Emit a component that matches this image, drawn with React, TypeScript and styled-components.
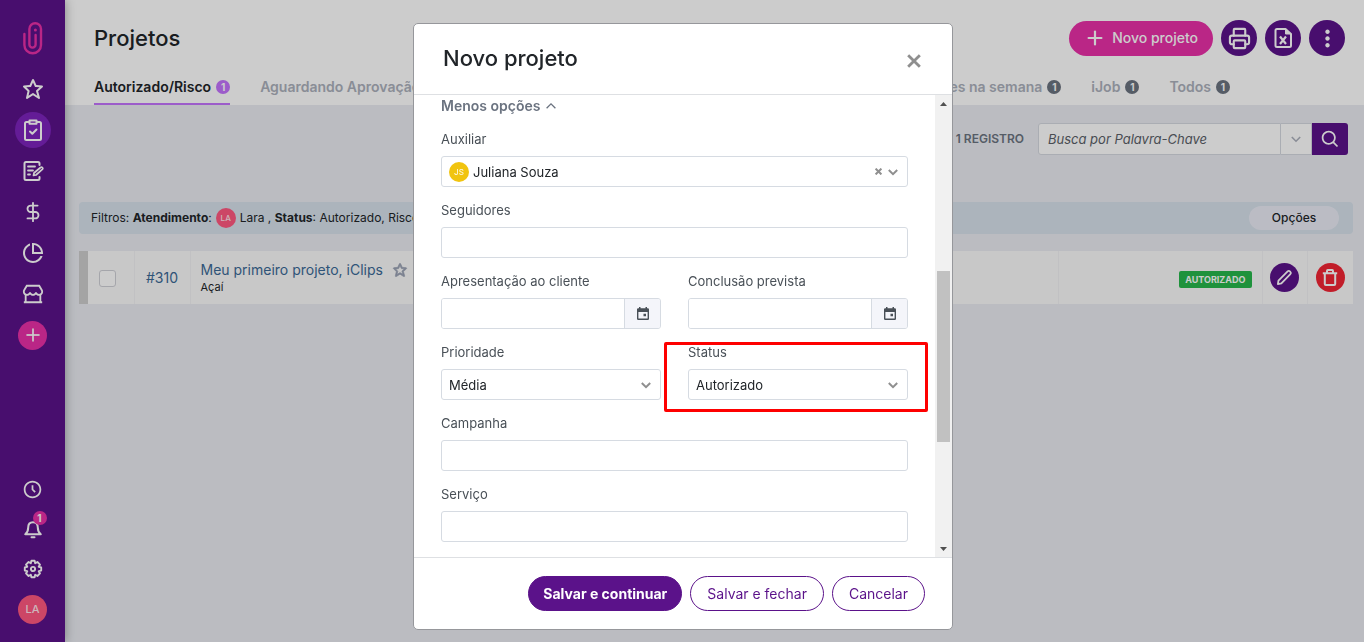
import React, { useId } from 'react';
import styled, { createGlobalStyle, css } from 'styled-components';
import { BiStar, BiTimeFive, BiDotsVerticalRounded, BiSearch } from 'react-icons/bi';
import { RiPieChartLine, RiStore2Line } from 'react-icons/ri';
import { LuDollarSign, LuPrinter, LuPlus } from 'react-icons/lu';

const purple = '#5b128a';
const pink = '#e930a8';

const GlobalStyle = createGlobalStyle`
  *, *::before, *::after { box-sizing: border-box; }
  body {
    margin: 0;
    background: #eaecf2;
    color: #212529;
    font-family: Inter, 'Liberation Sans', sans-serif;
    font-size: 14px;
    line-height: 20px;
  }
  button, input, select { font: inherit; color: inherit; margin: 0; }
  button { cursor: pointer; border: 0; padding: 0; background: none; }
  a { text-decoration: none; color: inherit; }
  svg { display: block; flex: none; }
`;

/* ---------- icons ---------- */

const ClipLogo = () => (
  <svg width="24" height="36" viewBox="0 0 24 36" fill="none" stroke={pink} strokeWidth="2.4" strokeLinecap="round">
    <path d="M3.4 14v11a8.3 8.3 0 0 0 16.6 0V9a5.8 5.8 0 0 0-11.6 0v15.500a3.100 3.100 0 0 0 6.200 0V15" />
    <circle cx="14.400" cy="10" r="1.500" fill={pink} stroke="none" />
  </svg>
);

const ClipboardIcon = () => (
  <svg width="20" height="22" viewBox="0 0 20 22" fill="none" stroke="currentColor" strokeWidth="2" strokeLinecap="round" strokeLinejoin="round">
    <path d="M6 3H3.500A1.500 1.500 0 0 0 2 4.500v15A1.500 1.500 0 0 0 3.500 21h13a1.500 1.500 0 0 0 1.500-1.500v-15A1.500 1.500 0 0 0 16.500 3H14" />
    <path d="M6.500 1.500h7v3.200h-7zM7 12.500l2.300 2.300L13.500 10.500" />
  </svg>
);

const NoteIcon = () => (
  <svg width="22" height="22" viewBox="0 0 22 22" fill="none" stroke="currentColor" strokeWidth="2" strokeLinecap="round" strokeLinejoin="round">
    <path d="M17.500 5V3.500a1.500 1.500 0 0 0-1.500-1.500H4a1.500 1.500 0 0 0-1.500 1.500v15A1.500 1.500 0 0 0 4 20h12a1.500 1.500 0 0 0 1.500-1.500V17" />
    <path d="M6 6.500h7M6 10.500h5M6 14.500h2" strokeWidth="1.800" />
    <path d="M11.500 15.500l.5-2.500 6.500-5.500a1.300 1.300 0 0 1 1.800 1.900L14 15z" strokeWidth="1.700" />
  </svg>
);

const BellIcon = () => (
  <svg width="20" height="20" viewBox="0 0 20 20" fill="none" stroke="currentColor" strokeWidth="2" strokeLinecap="round" strokeLinejoin="round">
    <path d="M10 3.200C6.600 3.200 5.200 5.800 5.200 8.500c0 3.500-1 5.300-3 6.700h15.600c-2-1.400-3-3.200-3-6.700 0-2.700-1.400-5.300-4.800-5.300z" />
    <path d="M8.500 18.200h3" />
  </svg>
);

const GearIcon = () => (
  <svg width="20" height="20" viewBox="0 0 20 20" fill="none" stroke="currentColor" strokeWidth="1.900" strokeLinejoin="round">
    <path d="M8.400 1.800h3.200l.6 2.500 2.200-1.300 2.600 2.600-1.300 2.200 2.500.6v3.200l-2.500.6 1.300 2.200-2.600 2.600-2.200-1.300-.6 2.500H8.400l-.6-2.500L5.600 17 3 14.400l1.300-2.200-2.500-.6V8.400l2.500-.6L3 5.600 5.600 3l2.200 1.300z" />
    <circle cx="10" cy="10" r="2.100" />
  </svg>
);

const SheetIcon = () => (
  <svg width="22" height="22" viewBox="0 0 22 22" fill="none" stroke="currentColor" strokeWidth="2" strokeLinejoin="round">
    <path d="M13.500 2H5a1.500 1.500 0 0 0-1.500 1.500v15A1.500 1.500 0 0 0 5 20h12.500a1.500 1.500 0 0 0 1.500-1.500V7z" />
    <path d="M13.500 2v5H19z" fill="currentColor" strokeWidth="1" />
    <path d="M8 9.500l6 7.500M14 9.500L8 17" strokeWidth="2.200" />
  </svg>
);

const PencilIcon = () => (
  <svg width="17" height="17" viewBox="0 0 18 18" fill="none" stroke="currentColor" strokeWidth="1.900" strokeLinejoin="round">
    <path d="M2 16l.6-3.700L12.300 2.600a1.700 1.700 0 0 1 2.400 0l.5.5a1.700 1.700 0 0 1 0 2.400L5.700 15.300z" />
  </svg>
);

const TrashIcon = () => (
  <svg width="16" height="18" viewBox="0 0 16 18" fill="none" stroke="currentColor" strokeWidth="2" strokeLinejoin="round">
    <path d="M2.800 4.500V15a1 1 0 0 0 1 1h8.400a1 1 0 0 0 1-1V4.500M.8 4.300h14.400M5 4V1.900a.8.8 0 0 1 .8-.8h4.400a.8.8 0 0 1 .8.8V4" />
  </svg>
);

const CalendarIcon = () => (
  <svg width="14" height="14" viewBox="0 0 14 14" fill="#495057">
    <path fillRule="evenodd" d="M3 0h1.500v1.200h5V0H11v1.200h.8A1.200 1.200 0 0 1 13 2.400v9.400a1.200 1.200 0 0 1-1.200 1.200H2.200A1.200 1.200 0 0 1 1 11.800V2.400a1.200 1.200 0 0 1 1.200-1.200H3zM2.400 5v6.600h9.200V5z" />
    <path d="M7.500 6.800H10v2.400H7.500z" />
  </svg>
);

const Chevron = ({ up = false, size = 10, weight = 2 }: { up?: boolean; size?: number; weight?: number }) => (
  <svg width={size} height={size} viewBox="0 0 10 10" fill="none" stroke="currentColor" strokeWidth={weight}>
    <path d={up ? 'M.6 7.200L5 2.800l4.400 4.400' : 'M.8 3L5 7.200 9.200 3'} />
  </svg>
);

const Cross = ({ size, weight }: { size: number; weight: number }) => (
  <svg width={size} height={size} viewBox="0 0 12 12" fill="none" stroke="#8f8f8f" strokeWidth={weight}>
    <path d="M1 1l10 10M11 1L1 11" />
  </svg>
);

/* ---------- page frame ---------- */

const Shell = styled.div`
  display: flex;
  min-height: 100vh;
`;

const Sidebar = styled.nav`
  display: flex;
  flex-direction: column;
  align-items: center;
  flex: none;
  width: 65px;
  padding: 20px 0 15px;
  background: ${purple};
  color: #fff;
  box-shadow: 0 0 10px rgba(0, 0, 0, 0.35);
  z-index: 1;
`;

const LogoLink = styled.a`
  height: 51px;
`;

const SideGroup = styled.div<{ $bottom?: boolean }>`
  display: flex;
  flex-direction: column;
  align-items: center;
  gap: ${p => (p.$bottom ? 4 : 5)}px;
  ${p => p.$bottom && 'margin-top: auto;'}
`;

const SideButton = styled.button<{ $active?: boolean }>`
  position: relative;
  display: grid;
  place-items: center;
  width: 36px;
  height: 36px;
  border-radius: 50%;
  background: ${p => (p.$active ? '#7d24bd' : 'transparent')};
`;

const Disc = styled.span<{ $size: number; $color: string; $font?: number }>`
  display: inline-grid;
  place-items: center;
  flex: none;
  width: ${p => p.$size}px;
  height: ${p => p.$size}px;
  border-radius: 50%;
  background: ${p => p.$color};
  color: rgba(255, 255, 255, 0.85);
  font-size: ${p => p.$font ?? 12}px;
  font-weight: 500;
`;

const Notice = styled.span`
  position: absolute;
  top: 0;
  right: 4px;
  width: 14px;
  border-radius: 50%;
  background: ${pink};
  font-size: 10px;
  font-weight: 700;
  line-height: 14px;
`;

const Main = styled.main`
  flex: 1;
  min-width: 0;
`;

const Header = styled.header`
  display: flex;
  flex-direction: column;
  height: 105px;
  padding: 20px 19px 0 29px;
  background: #fff;
`;

const TitleRow = styled.div`
  display: flex;
  align-items: center;
  justify-content: space-between;
`;

const Title = styled.h1`
  margin: 0;
  font-size: 22px;
  font-weight: 500;
  line-height: 36px;
`;

const Actions = styled.div`
  display: flex;
  align-items: center;
  gap: 8px;
`;

const NewButton = styled.button`
  display: flex;
  align-items: center;
  gap: 6px;
  height: 35px;
  padding: 0 15px;
  border-radius: 18px;
  background: ${pink};
  color: #fff;
  font-weight: 500;
`;

const RoundButton = styled.button<{ $size?: number; $color?: string }>`
  display: grid;
  place-items: center;
  width: ${p => p.$size ?? 36}px;
  height: ${p => p.$size ?? 36}px;
  border-radius: 50%;
  background: ${p => p.$color ?? purple};
  color: #fff;
`;

const Tabs = styled.div`
  display: flex;
  justify-content: space-between;
  margin-top: auto;
  padding-right: 115px;
`;

const TabGroup = styled.div`
  display: flex;
  gap: 30px;
  white-space: nowrap;
`;

const Tab = styled.a<{ $active?: boolean }>`
  display: flex;
  align-items: center;
  gap: 5px;
  height: 30px;
  padding-bottom: 5px;
  color: ${p => (p.$active ? '#212529' : '#acb1bc')};
  font-weight: 600;
  border-bottom: 2px solid ${p => (p.$active ? '#c373fd' : 'transparent')};
`;

const Count = styled.span<{ $active?: boolean }>`
  width: 14px;
  border-radius: 7px;
  background: ${p => (p.$active ? '#c373fd' : '#6b7380')};
  color: #fff;
  font-size: 10px;
  font-weight: 700;
  line-height: 14px;
  text-align: center;
`;

/* ---------- list ---------- */

const SearchRow = styled.form`
  display: flex;
  align-items: center;
  justify-content: flex-end;
  padding: 18px 16px 0 0;
`;

const Total = styled.span`
  margin-right: 14px;
  color: #6b7380;
  font-size: 12px;
  font-weight: 600;
`;

const SearchInput = styled.input`
  width: 243px;
  height: 32px;
  padding: 0 9px;
  border: 1px solid #d5d9e0;
  border-radius: 3px 0 0 3px;
  background: #fff;
  font-size: 13px;
  &::placeholder { color: #5b6068; font-style: italic; opacity: 1; }
`;

const SearchMore = styled.button`
  display: grid;
  place-items: center;
  width: 31px;
  height: 32px;
  border: 1px solid #d5d9e0;
  border-left: 0;
  background: #fff;
  color: #acb1bc;
`;

const SearchSubmit = styled.button`
  display: grid;
  place-items: center;
  width: 36px;
  height: 32px;
  border-radius: 0 3px 3px 0;
  background: ${purple};
  color: #fff;
`;

const Content = styled.div`
  padding: 47px 11px 0 14px;
`;

const Filters = styled.div`
  display: flex;
  align-items: center;
  justify-content: space-between;
  height: 32px;
  padding: 0 14px 0 12px;
  border-radius: 4px;
  background: #d7e1eb;
  font-size: 12px;
`;

const FilterText = styled.span`
  display: flex;
  align-items: center;
  gap: 4px;
`;

const OptionsButton = styled.button`
  width: 90px;
  height: 24px;
  border-radius: 12px;
  background: #eaecf6;
  font-weight: 500;
`;

const Table = styled.table`
  width: 100%;
  margin-top: 17px;
  border-collapse: collapse;
  background: #fafafa;
`;

const Cell = styled.td<{ $w?: number; $line?: boolean }>`
  height: 53px;
  padding: 0;
  ${p => p.$w && css`width: ${p.$w}px;`}
  ${p => p.$line && css`border-left: 1px solid #f2f2f4;`}
  text-align: center;
  vertical-align: middle;
`;

const StripeCell = styled(Cell)`
  background: #cecece;
`;

const TickCell = styled(Cell)`
  padding: 2px 0 0 11px;
`;

const NameCell = styled(Cell)`
  padding: 0 0 0 10px;
  text-align: left;
`;

const StatusCell = styled(Cell)`
  padding: 0 10px 0 0;
  text-align: right;
`;

const Tick = styled.input`
  appearance: none;
  display: block;
  width: 17px;
  height: 17px;
  margin: 0;
  border: 1px solid #cfd0d6;
  border-radius: 3px;
  background: #fff;
`;

const ProjectLink = styled.a`
  color: #3b6996;
`;

const NameLine = styled.div`
  display: flex;
  align-items: center;
  gap: 9px;
  line-height: 18px;
  svg { color: #9aa2b4; stroke: currentColor; stroke-width: 1; }
`;

const Client = styled.div`
  font-size: 11px;
  line-height: 16px;
`;

const StatusTag = styled.span`
  display: inline-block;
  padding: 0 6px;
  border-radius: 2px;
  background: #27b74b;
  color: #fff;
  font-size: 9px;
  font-weight: 700;
  line-height: 17px;
`;

const CellButton = styled(RoundButton)`
  margin: 0 auto;
`;

/* ---------- dialog ---------- */

const Backdrop = styled.div`
  position: fixed;
  inset: 0;
  z-index: 10;
  display: flex;
  justify-content: center;
  padding: 23px 0 12px 2px;
  background: rgba(0, 0, 0, 0.2);
`;

const Dialog = styled.section`
  display: flex;
  flex-direction: column;
  width: 540px;
  border: 1px solid #96979b;
  border-radius: 5px;
  background: #fff;
  overflow: hidden;
`;

const DialogHead = styled.header`
  display: flex;
  align-items: center;
  justify-content: space-between;
  flex: none;
  height: 71px;
  padding: 0 31px 0 29px;
  border-bottom: 1px solid #dee0e3;
`;

const DialogTitle = styled.h2`
  margin: 0;
  padding-bottom: 2px;
  font-size: 22px;
  font-weight: 500;
`;

const CloseButton = styled.button`
  padding-top: 4px;
`;

const DialogBody = styled.div`
  display: flex;
  flex: 1;
  min-height: 0;
  overflow: hidden;
`;

const Fields = styled.form`
  display: flex;
  flex-direction: column;
  gap: 13px;
  flex: 1;
  min-width: 0;
  padding: 0 27px;
`;

const ToggleButton = styled.button`
  display: flex;
  align-items: center;
  align-self: flex-start;
  gap: 6px;
  height: 21px;
  color: #6b7380;
  font-weight: 600;
`;

const Field = styled.div<{ $marked?: boolean }>`
  position: relative;
  display: flex;
  flex-direction: column;
  gap: 7px;
  min-width: 0;
  ${p => p.$marked && css`
    &::after {
      content: '';
      position: absolute;
      inset: 0 -20px -12px -24px;
      border: 3px solid #fe0000;
      border-radius: 2px;
      pointer-events: none;
    }
  `}
`;

const Pair = styled.div`
  display: grid;
  grid-template-columns: 1fr 1fr;
  gap: 27px;
`;

const Label = styled.label`
  color: #495057;
  font-size: 13px;
`;

const box = css`
  width: 100%;
  height: 31px;
  border: 1px solid #d6dbe2;
  border-radius: 3px;
  background: #fff;
  font-size: 13px;
`;

const TextInput = styled.input`
  ${box}
  padding: 0 8px;
`;

const PersonBox = styled.div`
  ${box}
  display: flex;
  align-items: center;
  gap: 4px;
  padding: 0 9px 0 7px;
  color: #8f8f8f;
`;

const PersonInput = styled.input`
  flex: 1;
  min-width: 0;
  padding: 0;
  border: 0;
  background: none;
  color: #212529;
`;

const PersonTools = styled.span`
  display: flex;
  align-items: center;
  gap: 6px;
`;

const DateBox = styled.div`
  ${box}
  display: flex;
  overflow: hidden;
`;

const DateInput = styled.input`
  flex: 1;
  min-width: 0;
  padding: 0 8px;
  border: 0;
`;

const DateButton = styled.button`
  display: grid;
  place-items: center;
  width: 36px;
  border-left: 1px solid #d6dbe2;
  background: #f4f5fa;
`;

const SelectWrap = styled.div`
  display: grid;
  align-items: center;
  color: #8f8f8f;
  > * { grid-area: 1 / 1; }
  > svg { justify-self: end; margin-right: 10px; pointer-events: none; }
`;

const Select = styled.select`
  ${box}
  appearance: none;
  padding: 0 24px 0 7px;
  color: #212529;
`;

const Scrollbar = styled.div`
  display: flex;
  flex: none;
  flex-direction: column;
  align-items: center;
  width: 17px;
  background: #f1f1f1;
`;

const ScrollArrow = styled.span`
  display: grid;
  place-items: center;
  width: 17px;
  height: 17px;
`;

const ScrollSpace = styled.span<{ $part: number }>`
  flex: ${p => p.$part};
`;

const ScrollThumb = styled.span`
  flex: 171;
  width: 13px;
  background: #c1c1c1;
`;

const DialogFoot = styled.footer`
  display: flex;
  align-items: center;
  justify-content: flex-end;
  gap: 8px;
  flex: none;
  height: 72px;
  padding: 0 27px;
  border-top: 1px solid #dee0e3;
`;

const PillButton = styled.button<{ $primary?: boolean }>`
  height: 35px;
  padding: 0 ${p => (p.$primary ? 14 : 16)}px;
  border: 1px solid ${purple};
  border-radius: 18px;
  background: ${p => (p.$primary ? purple : '#fff')};
  color: ${p => (p.$primary ? '#fff' : purple)};
  font-weight: ${p => (p.$primary ? 700 : 400)};
`;

function TextField({ label }: { label: string }) {
  const id = useId();
  return (
    <Field>
      <Label htmlFor={id}>{label}</Label>
      <TextInput id={id} type="text" />
    </Field>
  );
}

function DateField({ label }: { label: string }) {
  const id = useId();
  return (
    <Field>
      <Label htmlFor={id}>{label}</Label>
      <DateBox>
        <DateInput id={id} type="text" />
        <DateButton type="button" aria-label={label}><CalendarIcon /></DateButton>
      </DateBox>
    </Field>
  );
}

function SelectField({ label, value, marked }: { label: string; value: string; marked?: boolean }) {
  const id = useId();
  return (
    <Field $marked={marked}>
      <Label htmlFor={id}>{label}</Label>
      <SelectWrap>
        <Select id={id} defaultValue={value}><option>{value}</option></Select>
        <Chevron />
      </SelectWrap>
    </Field>
  );
}

function SideNav() {
  return (
    <Sidebar>
      <LogoLink href="#" aria-label="iClips"><ClipLogo /></LogoLink>
      <SideGroup>
        <SideButton aria-label="Favoritos"><BiStar size={24} /></SideButton>
        <SideButton $active aria-label="Projetos"><ClipboardIcon /></SideButton>
        <SideButton aria-label="Notas"><NoteIcon /></SideButton>
        <SideButton aria-label="Financeiro"><LuDollarSign size={22} /></SideButton>
        <SideButton aria-label="Relatórios"><RiPieChartLine size={24} /></SideButton>
        <SideButton aria-label="Loja"><RiStore2Line size={22} /></SideButton>
        <SideButton aria-label="Adicionar">
          <Disc $size={29} $color={pink}><LuPlus size={20} strokeWidth={2.4} /></Disc>
        </SideButton>
      </SideGroup>
      <SideGroup $bottom>
        <SideButton aria-label="Histórico"><BiTimeFive size={21} /></SideButton>
        <SideButton aria-label="Notificações"><BellIcon /><Notice>1</Notice></SideButton>
        <SideButton aria-label="Configurações"><GearIcon /></SideButton>
        <SideButton aria-label="Perfil"><Disc $size={29} $color="#ff5880" $font={11}>LA</Disc></SideButton>
      </SideGroup>
    </Sidebar>
  );
}

function ProjectDialog() {
  return (
    <Backdrop>
      <Dialog role="dialog" aria-modal="true" aria-label="Novo projeto">
        <DialogHead>
          <DialogTitle>Novo projeto</DialogTitle>
          <CloseButton aria-label="Fechar"><Cross size={14} weight={2.4} /></CloseButton>
        </DialogHead>
        <DialogBody>
          <Fields>
            <ToggleButton type="button">Menos opções <Chevron up weight={1.3} /></ToggleButton>
            <Field>
              <Label htmlFor="auxiliar">Auxiliar</Label>
              <PersonBox>
                <Disc $size={20} $color="#f1c40f" $font={8}>JS</Disc>
                <PersonInput id="auxiliar" defaultValue="Juliana Souza" />
                <PersonTools>
                  <button type="button" aria-label="Limpar"><Cross size={7} weight={3.4} /></button>
                  <Chevron />
                </PersonTools>
              </PersonBox>
            </Field>
            <TextField label="Seguidores" />
            <Pair>
              <DateField label="Apresentação ao cliente" />
              <DateField label="Conclusão prevista" />
            </Pair>
            <Pair>
              <SelectField label="Prioridade" value="Média" />
              <SelectField label="Status" value="Autorizado" marked />
            </Pair>
            <TextField label="Campanha" />
            <TextField label="Serviço" />
          </Fields>
          <Scrollbar aria-hidden="true">
            <ScrollArrow><svg width="7" height="4" viewBox="0 0 7 4" fill="#505050"><path d="M0 4l3.500-4L7 4z" /></svg></ScrollArrow>
            <ScrollSpace $part={159} />
            <ScrollThumb />
            <ScrollSpace $part={98} />
            <ScrollArrow><svg width="7" height="4" viewBox="0 0 7 4" fill="#505050"><path d="M0 0l3.500 4L7 0z" /></svg></ScrollArrow>
          </Scrollbar>
        </DialogBody>
        <DialogFoot>
          <PillButton $primary>Salvar e continuar</PillButton>
          <PillButton>Salvar e fechar</PillButton>
          <PillButton>Cancelar</PillButton>
        </DialogFoot>
      </Dialog>
    </Backdrop>
  );
}

export default function App() {
  return (
    <>
      <GlobalStyle />
      <Shell>
        <SideNav />
        <Main>
          <Header>
            <TitleRow>
              <Title>Projetos</Title>
              <Actions>
                <NewButton><LuPlus size={22} strokeWidth={2.4} />Novo projeto</NewButton>
                <RoundButton aria-label="Imprimir"><LuPrinter size={23} strokeWidth={2.2} /></RoundButton>
                <RoundButton aria-label="Exportar"><SheetIcon /></RoundButton>
                <RoundButton aria-label="Mais"><BiDotsVerticalRounded size={27} /></RoundButton>
              </Actions>
            </TitleRow>
            <Tabs>
              <TabGroup>
                <Tab href="#" $active>Autorizado/Risco <Count $active>1</Count></Tab>
                <Tab href="#">Aguardando Aprovação</Tab>
              </TabGroup>
              <TabGroup>
                <Tab href="#">Conclusões na semana <Count>1</Count></Tab>
                <Tab href="#">iJob <Count>1</Count></Tab>
                <Tab href="#">Todos <Count>1</Count></Tab>
              </TabGroup>
            </Tabs>
          </Header>
          <SearchRow>
            <Total>1 REGISTRO</Total>
            <SearchInput type="search" aria-label="Busca" placeholder="Busca por Palavra-Chave" />
            <SearchMore type="button" aria-label="Opções de busca"><Chevron weight={1.6} /></SearchMore>
            <SearchSubmit aria-label="Buscar"><BiSearch size={21} /></SearchSubmit>
          </SearchRow>
          <Content>
            <Filters>
              <FilterText>
                <span>Filtros: <b>Atendimento</b>:</span>
                <Disc $size={20} $color="#ff5880" $font={8}>LA</Disc>
                <span>Lara , <b>Status</b>: Autorizado, Risco</span>
              </FilterText>
              <OptionsButton>Opções</OptionsButton>
            </Filters>
            <Table>
              <tbody>
                <tr>
                  <StripeCell $w={9} />
                  <TickCell $w={46}><Tick type="checkbox" aria-label="Selecionar projeto 310" /></TickCell>
                  <Cell $w={56} $line><ProjectLink href="#">#310</ProjectLink></Cell>
                  <NameCell $line>
                    <NameLine><ProjectLink href="#">Meu primeiro projeto, iClips</ProjectLink><BiStar size={16} /></NameLine>
                    <Client>Açaí</Client>
                  </NameCell>
                  <StatusCell $w={204} $line><StatusTag>AUTORIZADO</StatusTag></StatusCell>
                  <Cell $w={45} $line><CellButton $size={29} aria-label="Editar"><PencilIcon /></CellButton></Cell>
                  <Cell $w={46} $line><CellButton $size={29} $color="#f22534" aria-label="Excluir"><TrashIcon /></CellButton></Cell>
                </tr>
              </tbody>
            </Table>
          </Content>
        </Main>
      </Shell>
      <ProjectDialog />
    </>
  );
}
